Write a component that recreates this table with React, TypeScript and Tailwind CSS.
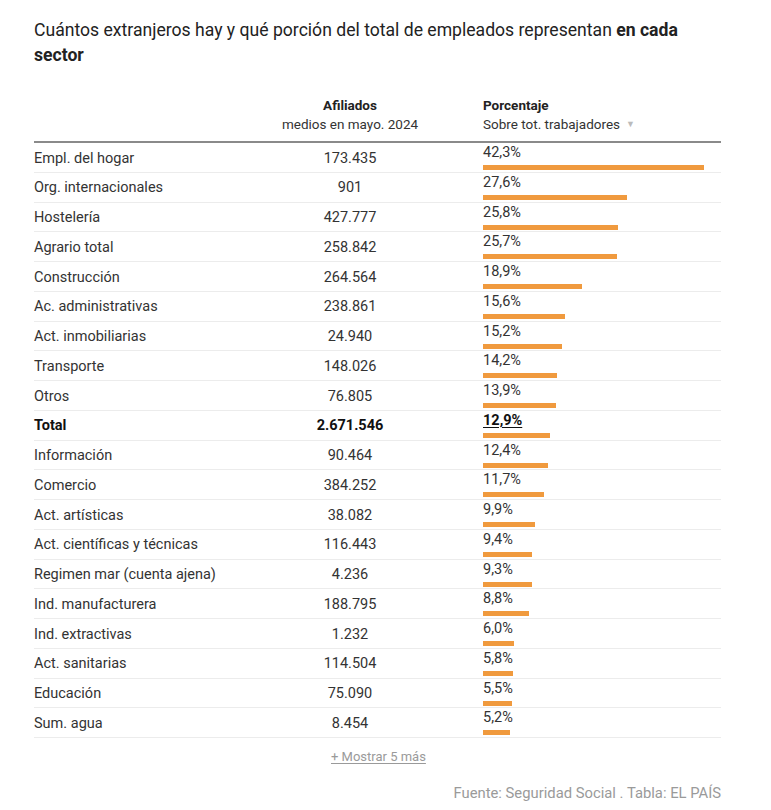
const rows: [string, string, number][] = [
  ["Empl. del hogar", "173.435", 42.3],
  ["Org. internacionales", "901", 27.6],
  ["Hostelería", "427.777", 25.8],
  ["Agrario total", "258.842", 25.7],
  ["Construcción", "264.564", 18.9],
  ["Ac. administrativas", "238.861", 15.6],
  ["Act. inmobiliarias", "24.940", 15.2],
  ["Transporte", "148.026", 14.2],
  ["Otros", "76.805", 13.9],
  ["Total", "2.671.546", 12.9],
  ["Información", "90.464", 12.4],
  ["Comercio", "384.252", 11.7],
  ["Act. artísticas", "38.082", 9.9],
  ["Act. científicas y técnicas", "116.443", 9.4],
  ["Regimen mar (cuenta ajena)", "4.236", 9.3],
  ["Ind. manufacturera", "188.795", 8.8],
  ["Ind. extractivas", "1.232", 6.0],
  ["Act. sanitarias", "114.504", 5.8],
  ["Educación", "75.090", 5.5],
  ["Sum. agua", "8.454", 5.2],
];

const fmt = (v: number) => v.toFixed(1).replace(".", ",") + "%";

export default function App() {
  return (
    <div className="min-h-[810px] bg-white px-[34px] pt-[18px] text-[#222] font-['Roboto',sans-serif]">
      <h1 className="w-[690px] text-[17.6px] leading-[25px] text-[#222]">
        Cuántos extranjeros hay y qué porción del total de empleados representan <b>en cada sector</b>
      </h1>

      <div className="mt-[28px] w-[687px]">
        <div className="grid grid-cols-[236px_160px_1fr] border-b-2 border-[#8a8a8a] pb-[7px] text-[13.5px] leading-[19px]">
          <div />
          <div className="text-center">
            <div className="font-bold">Afiliados</div>
            <div className="text-[#333]">medios en mayo. 2024</div>
          </div>
          <div className="pl-[53px]">
            <div className="font-bold">Porcentaje</div>
            <div className="flex items-center gap-[6px] text-[#333]">
              Sobre tot. trabajadores
              <span className="text-[9px] text-[#bbb]">▼</span>
            </div>
          </div>
        </div>

        {rows.map(([name, num, pct]) => {
          const total = name === "Total";
          return (
            <div
              key={name}
              className={`grid h-[29.75px] grid-cols-[236px_160px_1fr] border-b border-[#ececec] text-[14.5px] ${total ? "font-bold text-[#111]" : "text-[#333]"}`}
            >
              <div className="flex items-center pt-[2px]">{name}</div>
              <div className="flex items-center justify-center pt-[2px]">{num}</div>
              <div className="pl-[53px] pt-[1px]">
                <div className={`leading-[17px] ${total ? "underline decoration-1 underline-offset-2" : ""}`}>{fmt(pct)}</div>
                <div className="mt-[4px] h-[5px] bg-[#f09a3e]" style={{ width: `${pct * 5.23}px` }} />
              </div>
            </div>
          );
        })}

        <div className="mt-[9px] pl-[297px] text-[13px] text-[#9a9a9a] underline underline-offset-2">
          + Mostrar 5 más
        </div>
        <div className="mt-[15px] text-right text-[14.8px] text-[#9a9a9a]">
          Fuente: Seguridad Social . Tabla: EL PAÍS
        </div>
      </div>
    </div>
  );
}
